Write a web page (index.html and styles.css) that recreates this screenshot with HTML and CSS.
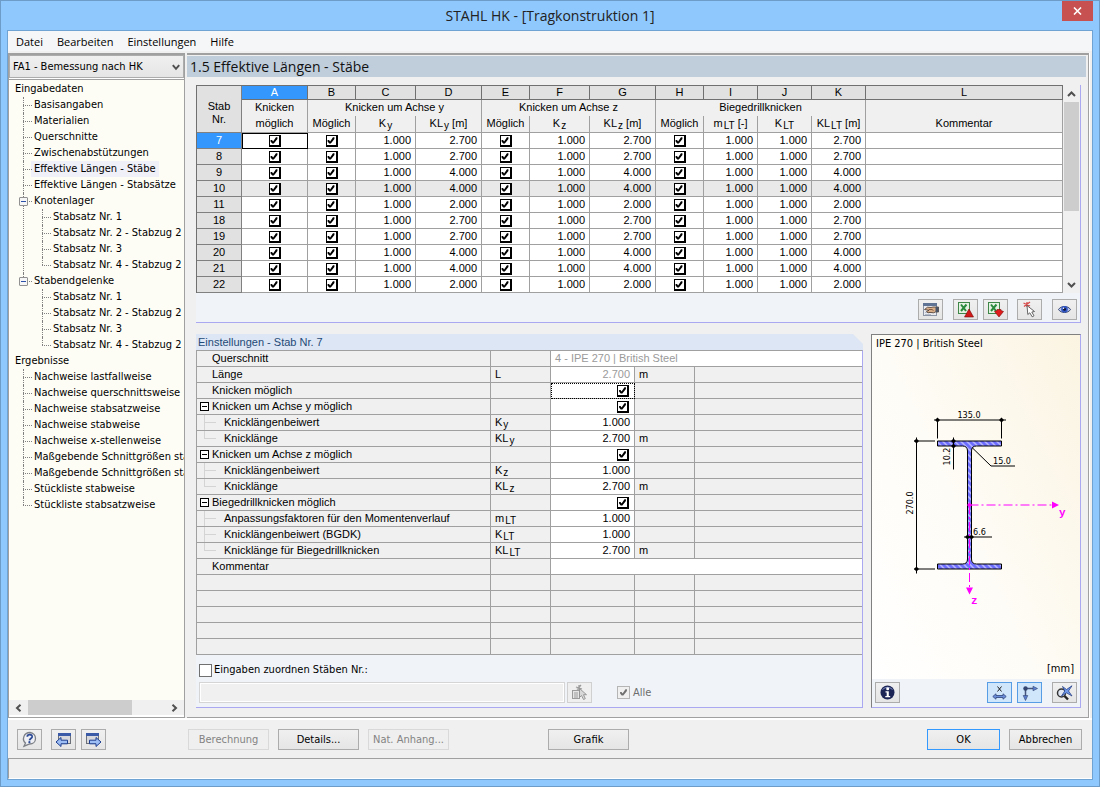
FILE: index.html
```html
<!DOCTYPE html>
<html lang="de">
<head>
<meta charset="utf-8">
<title>STAHL HK - [Tragkonstruktion 1]</title>
<link rel="stylesheet" href="styles.css">
</head>
<body>
<div class="window">
  <header class="titlebar">
    <h1 class="titlebar-text">STAHL HK - [Tragkonstruktion 1]</h1>
    <button class="close" type="button" aria-label="Schließen">
      <svg width="9" height="8" viewBox="0 0 9 8"><path d="M1 0.5 8 7.5M8 0.5 1 7.5" stroke="#fff" stroke-width="1.6"/></svg>
    </button>
  </header>
  <div class="client">
    <nav class="menubar">
      <button type="button">Datei</button>
      <button type="button">Bearbeiten</button>
      <button type="button">Einstellungen</button>
      <button type="button">Hilfe</button>
    </nav>
    <main class="main">
      <aside class="sidebar">
        <div class="case">
          <select class="case-select" aria-label="Bemessungsfall"><option>FA1 - Bemessung nach HK</option></select>
          <svg class="case-arrow" width="8" height="7" viewBox="0 0 8 7"><path d="M0.8 1.2 4 4.8 7.2 1.2" fill="none" stroke="#505050" stroke-width="2"/></svg>
        </div>
        <div class="tree-scroll">
          <ul class="tree">
            <li><span class="node">Eingabedaten</span>
              <ul class="branch">
                <li><span class="node">Basisangaben</span></li>
                <li><span class="node">Materialien</span></li>
                <li><span class="node">Querschnitte</span></li>
                <li><span class="node">Zwischenabstützungen</span></li>
                <li><span class="node node-active">Effektive Längen - Stäbe</span></li>
                <li><span class="node">Effektive Längen - Stabsätze</span></li>
                <li><button class="toggle" type="button" aria-label="Knotenlager einklappen"></button><span class="node">Knotenlager</span>
                  <ul class="branch">
                    <li><span class="node">Stabsatz Nr. 1</span></li>
                    <li><span class="node">Stabsatz Nr. 2 - Stabzug 2</span></li>
                    <li><span class="node">Stabsatz Nr. 3</span></li>
                    <li><span class="node">Stabsatz Nr. 4 - Stabzug 2</span></li>
                  </ul>
                </li>
                <li><button class="toggle" type="button" aria-label="Stabendgelenke einklappen"></button><span class="node">Stabendgelenke</span>
                  <ul class="branch">
                    <li><span class="node">Stabsatz Nr. 1</span></li>
                    <li><span class="node">Stabsatz Nr. 2 - Stabzug 2</span></li>
                    <li><span class="node">Stabsatz Nr. 3</span></li>
                    <li><span class="node">Stabsatz Nr. 4 - Stabzug 2</span></li>
                  </ul>
                </li>
              </ul>
            </li>
            <li><span class="node">Ergebnisse</span>
              <ul class="branch">
                <li><span class="node">Nachweise lastfallweise</span></li>
                <li><span class="node">Nachweise querschnittsweise</span></li>
                <li><span class="node">Nachweise stabsatzweise</span></li>
                <li><span class="node">Nachweise stabweise</span></li>
                <li><span class="node">Nachweise x-stellenweise</span></li>
                <li><span class="node">Maßgebende Schnittgrößen sta</span></li>
                <li><span class="node">Maßgebende Schnittgrößen sta</span></li>
                <li><span class="node">Stückliste stabweise</span></li>
                <li><span class="node">Stückliste stabsatzweise</span></li>
              </ul>
            </li>
          </ul>
        </div>
        <div class="hscroll">
          <svg width="7" height="8" viewBox="0 0 7 8"><path d="M5.5 0.8 2 4 5.5 7.2" fill="none" stroke="#505050" stroke-width="2"/></svg>
          <span class="hscroll-track"><span class="hscroll-thumb"></span></span>
          <svg width="7" height="8" viewBox="0 0 7 8"><path d="M1.5 0.8 5 4 1.5 7.2" fill="none" stroke="#505050" stroke-width="2"/></svg>
        </div>
      </aside>
      <section class="content">
        <h2 class="heading">1.5 Effektive Längen - Stäbe</h2>
        <div class="upper">
          <div class="grid-wrap">
            <table class="members">
              <colgroup>
                <col class="c-nr"><col class="c-a"><col class="c-b"><col class="c-c"><col class="c-d"><col class="c-b"><col class="c-c"><col class="c-d"><col class="c-b"><col class="c-i"><col class="c-i"><col class="c-i"><col>
              </colgroup>
              <thead>
                <tr class="letters">
                  <th rowspan="3" class="corner">Stab<br>Nr.</th>
                  <th class="selected">A</th><th>B</th><th>C</th><th>D</th><th>E</th><th>F</th><th>G</th><th>H</th><th>I</th><th>J</th><th>K</th><th>L</th>
                </tr>
                <tr class="groups">
                  <th>Knicken</th><th colspan="3">Knicken um Achse y</th><th colspan="3">Knicken um Achse z</th><th colspan="4">Biegedrillknicken</th><th></th>
                </tr>
                <tr class="labels">
                  <th>möglich</th><th>Möglich</th><th>K<sub>y</sub></th><th>KL<sub>y</sub> [m]</th><th>Möglich</th><th>K<sub>z</sub></th><th>KL<sub>z</sub> [m]</th><th>Möglich</th><th>m<sub>LT</sub> [-]</th><th>K<sub>LT</sub></th><th>KL<sub>LT</sub> [m]</th><th>Kommentar</th>
                </tr>
              </thead>
              <tbody id="member-rows"></tbody>
            </table>
            <div class="vscroll">
              <svg width="9" height="6" viewBox="0 0 9 6"><path d="M1 5 4.5 1.5 8 5" fill="none" stroke="#505050" stroke-width="2"/></svg>
              <span class="vscroll-track"><span class="vscroll-thumb"></span></span>
              <svg width="9" height="6" viewBox="0 0 9 6"><path d="M1 1 4.5 4.5 8 1" fill="none" stroke="#505050" stroke-width="2"/></svg>
            </div>
          </div>
          <div class="tools">
            <button class="icon-btn" type="button" aria-label="Querschnitt wählen">
              <svg width="17" height="15" viewBox="0 0 17 15"><rect x="1.500" y="1.500" width="13" height="12" fill="#e8eaf0" stroke="#8b94a4"/><path d="M1 1h14v3H1z" fill="#5f7394"/><path d="M3 10.500h9M3 12.500h6" stroke="#b4bbc8"/><path d="M2.500 7.500 5.500 5.200 9 5.500 11 5h5.500v5h-3l-2 .8-3.500-.4-2 .4-1.500-1.300 2.500-1.200z" fill="#d9ad88" stroke="#4a3a30" stroke-width=".8"/><path d="M13.500 5h3v5h-3z" fill="#4a5468"/><path d="M7 7.500h3l1.500 1" stroke="#6a4a34" stroke-width=".8" fill="none"/></svg>
            </button>
            <button class="icon-btn gap-10" type="button" aria-label="Excel-Export">
              <svg width="17" height="17" viewBox="0 0 17 17"><rect x="1.500" y="1.500" width="11" height="11" fill="#e4f2e4" stroke="#3f8748"/><path d="M4 3.500 9 10M9.500 3.500 4 10" stroke="#2a8a3c" stroke-width="2"/><path d="M12 8 16.500 16H7.500z" fill="#d11a1a" stroke="#7a0a0a" stroke-width=".6"/></svg>
            </button>
            <button class="icon-btn gap-5" type="button" aria-label="Excel-Import">
              <svg width="17" height="17" viewBox="0 0 17 17"><rect x="1.500" y="1.500" width="11" height="11" fill="#e4f2e4" stroke="#3f8748"/><path d="M4 3.500 9 10M9.500 3.500 4 10" stroke="#2a8a3c" stroke-width="2"/><path d="M7.500 10.500l2.500-1V8.500h4v1l2.500 1L12 16z" fill="#e01b1b" stroke="#7a0a0a" stroke-width=".6"/></svg>
            </button>
            <button class="icon-btn gap-9" type="button" aria-label="Stab in Grafik wählen">
              <svg width="15" height="17" viewBox="0 0 15 17"><path d="M1.500 2 8 5M2 5.500 8 1M5 1v5" stroke="#d84a4a" stroke-width="1.300"/><path d="M5 4.500l.8 9 2-1.700 2.400 4 1.800-1-2.200-3.800 2.700-.5z" fill="#fff" stroke="#555" stroke-width=".9"/></svg>
            </button>
            <button class="icon-btn gap-10" type="button" aria-label="Ansicht">
              <svg width="15" height="11" viewBox="0 0 15 11"><path d="M1.500 5.500C4 1.500 11 1.500 13.500 5.500 11 9.500 4 9.500 1.500 5.500z" fill="#bccbf2" stroke="#34426e"/><circle cx="7.500" cy="5.300" r="3.300" fill="#3156c4"/><circle cx="7.500" cy="5.300" r="1.500" fill="#0b1233"/><circle cx="6.500" cy="4.200" r=".8" fill="#fff"/></svg>
            </button>
          </div>
        </div>
        <div class="lower">
          <div class="settings">
            <h3 class="settings-title">Einstellungen - Stab Nr. 7</h3>
            <table class="props">
              <colgroup><col class="p-name"><col class="p-sym"><col class="p-val"><col class="p-sym"><col></colgroup>
              <tbody>
                <tr><th>Querschnitt</th><td></td><td colspan="3" class="white muted">4 - IPE 270 | British Steel</td></tr>
                <tr><th>Länge</th><td>L</td><td class="num muted">2.700</td><td>m</td><td></td></tr>
                <tr><th>Knicken möglich</th><td></td><td class="num focus"><input type="checkbox" class="tick" aria-label="Knicken möglich" checked></td><td></td><td></td></tr>
                <tr><th class="parent"><button class="fold" type="button" aria-label="Einklappen"></button>Knicken um Achse y möglich</th><td></td><td class="num"><input type="checkbox" class="tick" aria-label="Knicken um Achse y möglich" checked></td><td></td><td></td></tr>
                <tr><th class="child">Knicklängenbeiwert</th><td>K<sub>y</sub></td><td class="num">1.000</td><td></td><td></td></tr>
                <tr><th class="child last">Knicklänge</th><td>KL<sub>y</sub></td><td class="num">2.700</td><td>m</td><td></td></tr>
                <tr><th class="parent"><button class="fold" type="button" aria-label="Einklappen"></button>Knicken um Achse z möglich</th><td></td><td class="num"><input type="checkbox" class="tick" aria-label="Knicken um Achse z möglich" checked></td><td></td><td></td></tr>
                <tr><th class="child">Knicklängenbeiwert</th><td>K<sub>z</sub></td><td class="num">1.000</td><td></td><td></td></tr>
                <tr><th class="child last">Knicklänge</th><td>KL<sub>z</sub></td><td class="num">2.700</td><td>m</td><td></td></tr>
                <tr><th class="parent"><button class="fold" type="button" aria-label="Einklappen"></button>Biegedrillknicken möglich</th><td></td><td class="num"><input type="checkbox" class="tick" aria-label="Biegedrillknicken möglich" checked></td><td></td><td></td></tr>
                <tr><th class="child">Anpassungsfaktoren für den Momentenverlauf</th><td>m<sub>LT</sub></td><td class="num">1.000</td><td></td><td></td></tr>
                <tr><th class="child">Knicklängenbeiwert (BGDK)</th><td>K<sub>LT</sub></td><td class="num">1.000</td><td></td><td></td></tr>
                <tr><th class="child last">Knicklänge für Biegedrillknicken</th><td>KL<sub>LT</sub></td><td class="num">2.700</td><td>m</td><td></td></tr>
                <tr><th>Kommentar</th><td></td><td colspan="3" class="white"></td></tr>
                <tr><th></th><td></td><td></td><td></td><td></td></tr>
                <tr><th></th><td></td><td></td><td></td><td></td></tr>
                <tr><th></th><td></td><td></td><td></td><td></td></tr>
                <tr><th></th><td></td><td></td><td></td><td></td></tr>
                <tr><th></th><td></td><td></td><td></td><td></td></tr>
              </tbody>
            </table>
            <div class="assign">
              <label class="assign-check"><input type="checkbox" class="box">Eingaben zuordnen Stäben Nr.:</label>
              <div class="assign-row">
                <input class="assign-input" type="text" aria-label="Stäbe Nr." disabled>
                <button class="icon-btn" type="button" aria-label="Stäbe wählen" disabled>
                  <svg width="17" height="17" viewBox="0 0 17 17"><rect x="1.500" y="6.500" width="7" height="8" fill="#e6e6e6" stroke="#9c9c9c"/><path d="M3 9h4M3 11h4M3 13h4" stroke="#9c9c9c"/><path d="M5 3 11 5M6 5.500 10 1M8 1v5" stroke="#9c9c9c" stroke-width="1.300"/><path d="M8.500 4.500v9l2-2 2 4 1.800-.8-1.800-4h3z" fill="#d8d8d8" stroke="#909090" stroke-width=".9"/></svg>
                </button>
                <label class="all-check"><input type="checkbox" class="box" checked disabled>Alle</label>
              </div>
            </div>
          </div>
          <div class="preview">
            <div class="canvas">
              <span class="canvas-title">IPE 270 | British Steel</span>
              <svg class="profile" viewBox="0 0 208 308" role="img" aria-label="Querschnitt IPE 270">
                <defs>
                  <pattern id="hatch" width="6" height="6" patternUnits="userSpaceOnUse"><rect width="6" height="6" fill="#6c6cff"/><path d="M-1 -1 7 7M-1 5 1 7M5 -1 7 1" stroke="#d4d4ff" stroke-width="1.200"/></pattern>
                </defs>
                <path d="M65.500 88.500h64v5h-25q-5 0-5 5v108q0 5 5 5h25v5h-64v-5h25q5 0 5-5v-108q0-5-5-5h-25z" fill="url(#hatch)" stroke="#000"/>
                <g stroke="#000" fill="none">
                  <path d="M62 67.500h72M65.500 67v19M129.500 67v19"/>
                  <path d="M44.500 85v136M42 88.500h21M42 216.500h21"/>
                  <path d="M81.500 85v32M100 95l19 18.500h24M92 184.500h28"/>
                </g>
                <path d="M65.500 65l2.500 2.500-2.500 2.500-2.500-2.500zM129.500 65l2.500 2.500-2.500 2.500-2.500-2.500zM44.500 86l2.500 2.500-2.500 2.500-2.500-2.500zM44.500 214l2.500 2.500-2.500 2.500-2.500-2.500zM81.500 86l2.500 2.500-2.500 2.500-2.500-2.500zM81.500 91l2.500 2.500-2.500 2.500-2.500-2.500zM95.500 182l2.500 2.500-2.500 2.500-2.500-2.500zM99.500 182l2.500 2.500-2.500 2.500-2.500-2.500z"/>
                <g class="dims">
                  <text x="97" y="65" text-anchor="middle">135.0</text>
                  <text x="121" y="111">15.0</text>
                  <text x="101" y="182">6.6</text>
                  <text transform="translate(41 150.500) rotate(-90)" text-anchor="middle">270.0</text>
                  <text transform="translate(78 104) rotate(-90)" text-anchor="middle">10.2</text>
                </g>
                <path d="M97.500 152.500H182M97.500 152.500V236" stroke="#f0f" stroke-dasharray="9 3 2 3" fill="none"/>
                <path d="M180 149l7 3.500-7 3.500zM94 235h7l-3.500 7zM97.500 150l2.500 2.500-2.500 2.500-2.500-2.500z" fill="#f0f"/>
                <g class="axes"><text x="187" y="163">y</text><text x="99" y="251">z</text></g>
              </svg>
              <span class="canvas-unit">[mm]</span>
            </div>
            <div class="preview-tools">
              <button class="icon-btn" type="button" aria-label="Info">
                <svg width="15" height="15" viewBox="0 0 15 15"><circle cx="7.500" cy="7.500" r="7" fill="#1c2556"/><path d="M2.500 4.500Q7.500 0 12.500 4.500" fill="none" stroke="#7e8ac0"/><circle cx="7.700" cy="3.800" r="1.500" fill="#fff"/><path d="M5.500 6.200h3.300v4.800h1.400v1.300H5.300v-1.300h1.400V7.500H5.500z" fill="#fff"/></svg>
              </button>
              <span class="grow"></span>
              <button class="icon-btn pressed" type="button" aria-label="Bemaßung">
                <svg width="15" height="15" viewBox="0 0 15 15"><path d="M5.500 1.500 9.500 6.500M9.500 1.500 5.500 6.500" stroke="#222"/><path d="M0.800 11.500 4 8.800v1.700h7V8.800l3.200 2.700-3.200 2.700v-1.700H4v1.700z" fill="#6c8fdb" stroke="#3a5088" stroke-width=".9"/></svg>
              </button>
              <button class="icon-btn pressed gap-5" type="button" aria-label="Achsen">
                <svg width="16" height="16" viewBox="0 0 16 16"><path d="M3.500 12V3.500H12" fill="none" stroke="#45557c" stroke-width="1.500"/><path d="M11 1.200 15.500 3.500 11 5.800zM1.200 10.500h4.600L3.500 15.500z" fill="#5d7fd0" stroke="#33456f" stroke-width=".6"/><circle cx="3.500" cy="3.500" r="2.200" fill="#33456f"/></svg>
              </button>
              <button class="icon-btn gap-10" type="button" aria-label="Ansicht zurücksetzen">
                <svg width="17" height="16" viewBox="0 0 17 16"><circle cx="5.500" cy="8" r="4" fill="#dfe6f2" stroke="#333" stroke-width="1.500"/><path d="M8.500 11 12 14.500" stroke="#222" stroke-width="2.400"/><path d="M6.500 1.500 10.500 4.500 16 .8 12.500 6 16 11 10.500 7.800 5.500 11 8.800 6z" fill="#6f97e8" stroke="#27428a" stroke-width=".8"/></svg>
              </button>
            </div>
          </div>
        </div>
      </section>
    </main>
    <footer class="actions">
      <button class="icon-btn" type="button" aria-label="Hilfe">
        <svg width="17" height="17" viewBox="0 0 17 17"><path d="M9 1.500a6 5.800 0 0 1 5.500 6c0 3.500-2.700 5.500-5.800 5.500L3 15.200 4.500 12C.7 9 2.500 1.500 9 1.500z" fill="#eef0f5" stroke="#7d8086" stroke-width="1.300"/><path d="M6.300 5.800c0-3.200 5.400-2.800 4.800.2-.4 1.500-2.400 1.500-2.600 3.300" fill="none" stroke="#2d4a96" stroke-width="1.800"/><circle cx="8.400" cy="11.200" r="1.100" fill="#2d4a96"/></svg>
      </button>
      <button class="icon-btn gap-9" type="button" aria-label="Vorherige Maske">
        <svg width="17" height="16" viewBox="0 0 17 16"><rect x="3.500" y="1.500" width="12" height="10" fill="#d6d8de" stroke="#6c7079"/><path d="M3 1h13v3H3z" fill="#3a5aa8"/><path d="M1 10 6 5.500v2.700h6.500v3.600H6v2.700z" fill="#9dbdf5" stroke="#1d3d8f"/></svg>
      </button>
      <button class="icon-btn gap-5" type="button" aria-label="Nächste Maske">
        <svg width="17" height="16" viewBox="0 0 17 16"><rect x="1.500" y="1.500" width="12" height="10" fill="#d6d8de" stroke="#6c7079"/><path d="M1 1h13v3H1z" fill="#3a5aa8"/><path d="M16 10 11 5.500v2.700H4.500v3.600H11v2.700z" fill="#9dbdf5" stroke="#1d3d8f"/></svg>
      </button>
      <div class="action-group">
        <button class="btn" type="button" disabled>Berechnung</button>
        <button class="btn" type="button">Details...</button>
        <button class="btn" type="button" disabled>Nat. Anhang...</button>
      </div>
      <button class="btn graphic" type="button">Grafik</button>
      <span class="grow"></span>
      <div class="dialog-group">
        <button class="btn btn-narrow btn-default" type="button">OK</button>
        <button class="btn btn-narrow" type="button">Abbrechen</button>
      </div>
    </footer>
    <div class="status"></div>
  </div>
</div>
<script src="members.js"></script>
</body>
</html>
```
FILE: members.js
```js
// Member number and effective length in metres (same for y, z and LT).
const members = [
  ["7", "2.700"], ["8", "2.700"], ["9", "4.000"], ["10", "4.000"], ["11", "2.000"],
  ["18", "2.700"], ["19", "2.700"], ["20", "4.000"], ["21", "4.000"], ["22", "2.000"]
];

const tick = (label) => `<td class="center"><input type="checkbox" class="tick" aria-label="${label}" checked></td>`;
const num = (value) => `<td class="num">${value}</td>`;

document.getElementById("member-rows").innerHTML = members.map(([nr, len], i) => {
  const cls = i === 0 ? "current" : nr === "10" ? "shaded" : "";
  return `<tr class="${cls}"><th>${nr}</th>` +
    tick(`Stab ${nr} Knicken möglich`) +
    tick(`Stab ${nr} Knicken um y`) + num("1.000") + num(len) +
    tick(`Stab ${nr} Knicken um z`) + num("1.000") + num(len) +
    tick(`Stab ${nr} Biegedrillknicken`) + num("1.000") + num("1.000") + num(len) +
    "<td></td></tr>";
}).join("");
```
FILE: styles.css
```css
* { box-sizing: border-box; }

:root {
  --ui: "DejaVu Sans Condensed", "Noto Sans", sans-serif;
  --segoe: "Open Sans", "Noto Sans", sans-serif;
  --grid: "Liberation Sans", Arial, sans-serif;
  --line: #a0a0a0;
  --face: #f0f0f0;
  --violet: #a9a8f0;
  --band: #f0f4f9;
}

body { margin: 0; font: 11px/16px var(--ui); color: #000; }
button, input, select { font: inherit; color: inherit; margin: 0; }
svg { display: block; flex: none; }
ul { margin: 0; padding: 0; list-style: none; }
table { border-collapse: separate; border-spacing: 0; table-layout: fixed; width: 100%; }
th { font-weight: normal; }

.window { min-height: 100vh; display: flex; flex-direction: column; background: #8fc8fd; border: 1px solid #6d9cc8; padding: 0 6px 6px; }
.titlebar { height: 29px; display: grid; grid-template-columns: 1fr auto 1fr; align-items: start; }
.titlebar-text { grid-column: 2; margin: 0; font: 14px/29px var(--segoe); color: #222; }
.close { justify-self: end; width: 31px; height: 20px; padding: 0; border: 0; background: #c75050; display: flex; align-items: center; justify-content: center; }

.client { flex: 1; display: flex; flex-direction: column; border: 1px solid #6fa3d4; background: var(--face); min-width: 0; }
.menubar { display: flex; height: 22px; padding: 0 1px; background: #f5f6f7; border-bottom: 2px solid var(--face); }
.menubar button { border: 0; background: none; padding: 0 7px; font: 11px/19px var(--segoe); }

.main { flex: 1; display: grid; grid-template-columns: 177px minmax(0, 1fr); column-gap: 2px; }
.sidebar { display: flex; flex-direction: column; border: 1px solid var(--line); border-top-width: 2px; background: #fff; min-width: 0; }
.case { position: relative; padding-bottom: 1px; border-bottom: 1px solid var(--line); }
.case-select { display: block; width: 100%; height: 23px; padding: 0 20px 0 3px; appearance: none; border: 1px solid #acacac; border-radius: 0; background: linear-gradient(#f0f0f0, #e5e5e5); }
.case-arrow { position: absolute; right: 4px; top: 9px; }

.tree-scroll { flex: 1; overflow: hidden; background: #fdfdf5; margin-left: 1px; }
.tree { padding: 1px 0 0 2px; white-space: nowrap; }
.tree li { position: relative; }
.node { display: inline-block; padding: 0 3px; height: 16px; line-height: 16px; vertical-align: top; }
.node-active { background: #f0f0f8; }
.branch { padding-left: 19px; }
.branch > li::before { content: ""; position: absolute; left: -8px; top: 0; bottom: 0; border-left: 1px dotted #808080; }
.branch > li:last-child::before { bottom: auto; height: 8px; }
.branch > li::after { content: ""; position: absolute; left: -8px; top: 8px; width: 9px; border-top: 1px dotted #808080; }
.toggle { position: absolute; z-index: 1; left: -12px; top: 4px; width: 9px; height: 9px; padding: 0; border: 1px solid #919191; border-radius: 1px; background: linear-gradient(#2b52a8, #2b52a8) center / 5px 1px no-repeat #f6f6f6; }

.hscroll { display: flex; align-items: center; gap: 6px; height: 15px; margin-bottom: 2px; padding: 0 6px; background: var(--face); }
.hscroll-track { flex: 1; }
.hscroll-thumb { display: block; width: 76%; height: 15px; background: #cdcdcd; }

.content { display: flex; flex-direction: column; min-width: 0; margin-right: 3px; padding: 1px 2px 9px 0; border: solid var(--line); border-width: 2px 1px 1px 0; box-shadow: 1px 0 0 #fff; }
.heading { margin: 0; padding: 0 3px; background: #c0cddb; font: 14px/21px var(--segoe); color: #111; }

.upper { margin: 8px 5px 0 9px; border: solid var(--violet); border-width: 0 1px 1px 0; background: var(--band); }
.grid-wrap { display: grid; grid-template-columns: minmax(0, 1fr) 17px; }
.members, .props { font-family: var(--grid); }
.members { border: solid #707070; border-width: 1px 0 0 1px; background: #fff; }
.c-nr { width: 45px; } .c-a { width: 66px; } .c-b { width: 48px; } .c-c { width: 60px; } .c-d { width: 66px; } .c-i { width: 54px; }
.members th, .members td { padding: 0; height: 16px; line-height: 15px; border: solid var(--line); border-width: 0 1px 1px 0; overflow: hidden; white-space: nowrap; }
.members thead th { background: var(--face); }
.members .letters th { height: 14px; line-height: 13px; background: #e1e1e1; border-color: #707070; }
.members .letters .corner { padding-top: 7px; vertical-align: middle; border-color: #808080; }
.members .letters .selected, .members .current th { background: #3397fd; color: #fff; }
.members .groups th { border-bottom: 0; height: 16px; line-height: 14px; padding-bottom: 2px; }
.members .labels th { height: 17px; line-height: 14px; padding-bottom: 2px; }
.members tbody th { background: #e1e1e1; border-color: #808080; }
.members .num { text-align: right; padding-right: 4px; }
.center { text-align: center; }
.members .shaded td { background: #e9e9e9; }
.members .current td:nth-child(2) { outline: 1px solid #000; outline-offset: -1px; }
sub { font-size: 10px; line-height: 1px; vertical-align: -2px; margin-left: 1px; }

.tick { appearance: none; display: inline-block; vertical-align: top; width: 12px; height: 12px; margin-top: 2px; border: solid #000; border-width: 1px 2px 2px 1px; background: #fff; }
.tick:checked::before, .box:checked::before { content: ""; display: block; width: 9px; height: 9px; background: currentColor; clip-path: polygon(12% 44%, 28% 44%, 40% 62%, 72% 14%, 88% 14%, 88% 32%, 48% 84%, 30% 84%, 12% 60%); }

.vscroll { display: flex; flex-direction: column; align-items: center; background: var(--face); padding: 6px 0 5px; }
.vscroll-track { flex: 1; width: 15px; padding: 5px 0; }
.vscroll-thumb { display: block; height: 62%; background: #cdcdcd; }

.tools { display: flex; justify-content: flex-end; padding: 6px 3px 2px; }
.icon-btn { flex: none; width: 25px; height: 21px; padding: 0; display: flex; align-items: center; justify-content: center; border: 1px solid #acacac; background: linear-gradient(#f0f0f0, #e5e5e5); }
.icon-btn:disabled { border-color: #d0d0d0; background: #efefef; }
.pressed { border-color: #569de5; background: #cfe6fb; }
.gap-5 { margin-left: 5px; }
.gap-9 { margin-left: 9px; }
.gap-10 { margin-left: 10px; }
.grow { flex: 1; }

.lower { flex: 1; display: grid; grid-template-columns: minmax(0, 667px) minmax(210px, 1fr); column-gap: 8px; margin: 11px 5px 0 9px; }
.settings { display: flex; flex-direction: column; }
.settings-title { margin: 0; padding: 0 2px; font: 11px/16px var(--grid); color: #1f4a77; background: #dce6f4; clip-path: polygon(0 0, calc(100% - 10px) 0, 100% 10px, 100% 100%, 0 100%); }
.props { border: 1px solid var(--line); border-bottom: 0; border-right-color: var(--violet); background: var(--face); }
.p-name { width: 294px; } .p-sym { width: 60px; } .p-val { width: 84px; }
.props th, .props td { height: 16px; line-height: 15px; padding: 0 4px; text-align: left; border: solid var(--line); border-width: 0 1px 1px 0; white-space: nowrap; overflow: hidden; }
.props tr > :last-child { border-right: 0; }
.props th { padding-left: 15px; }
.props .parent { padding-left: 3px; }
.props .child { padding-left: 27px; background: linear-gradient(#d4d4d4, #d4d4d4) 7px 0 / 1px 100% no-repeat, linear-gradient(#d4d4d4, #d4d4d4) 7px 7px / 12px 1px no-repeat; }
.props .last { background-size: 1px 8px, 12px 1px; }
.props .num { text-align: right; background: #fff; padding-right: 4px; }
.props .tick { margin-right: 1px; }
.props .white { background: #fff; }
.muted { color: #9a9a9a; }
.focus { outline: 1px dotted #000; outline-offset: -1px; }
.fold { display: inline-block; vertical-align: top; width: 9px; height: 9px; margin: 3px 3px 0 0; padding: 0; border: 1px solid #000; background: linear-gradient(#000, #000) center / 5px 1px no-repeat #fff; }

.assign { flex: 1; display: flex; flex-direction: column; justify-content: space-between; padding: 7px 2px 4px 3px; border: solid var(--violet); border-width: 0 1px 1px 0; background: var(--band); }
.assign label { display: flex; align-items: center; }
.assign-check { gap: 2px; }
.box { appearance: none; width: 13px; height: 13px; border: 1px solid #707070; background: #fff; padding: 1px; }
.box:disabled { border-color: #b5b5b5; background: var(--face); color: #707070; }
.assign-row { display: flex; align-items: center; }
.assign-input { width: 366px; height: 21px; border: 1px solid #d5d5d5; background: var(--face); box-shadow: inset 0 0 0 1px #fff; margin-right: 2px; }
.all-check { margin-left: 25px; gap: 3px; color: #6d6d6d; }

.preview { display: flex; flex-direction: column; border: 1px solid var(--violet); border-top-color: #808080; border-left-color: #808080; background: var(--band); min-width: 0; }
.canvas { flex: 1; display: flex; flex-direction: column; min-height: 0; background: linear-gradient(245deg, #fbf4e2, #fefcf6 55%, #fff); }
.canvas-title { padding: 0 4px; line-height: 17px; }
.profile { width: 100%; flex: 1; min-height: 0; }
.dims { font: 9px var(--ui); }
.axes { font: bold 11px "Liberation Mono", monospace; fill: #f0f; }
.canvas-unit { text-align: right; padding: 0 6px 2px; }
.preview-tools { display: flex; padding: 3px 3px 4px; }

.actions { display: flex; align-items: center; padding: 9px 10px 8px 9px; border-top: 2px solid #fff; }
.action-group { display: flex; gap: 9px; margin-left: 82px; }
.graphic { margin-left: 99px; }
.dialog-group { display: flex; gap: 9px; }
.btn { width: 81px; height: 21px; padding: 0; border: 1px solid #acacac; background: linear-gradient(#f0f0f0, #e5e5e5); white-space: nowrap; }
.btn:disabled { border-color: #d9d9d9; background: #efefef; color: #838383; }
.btn-narrow { width: 73px; }
.btn-default { border-color: #3399ff; }
.status { height: 21px; border: 1px solid var(--line); border-width: 1px 0 0 1px; border-bottom: 1px solid #fff; }
```
